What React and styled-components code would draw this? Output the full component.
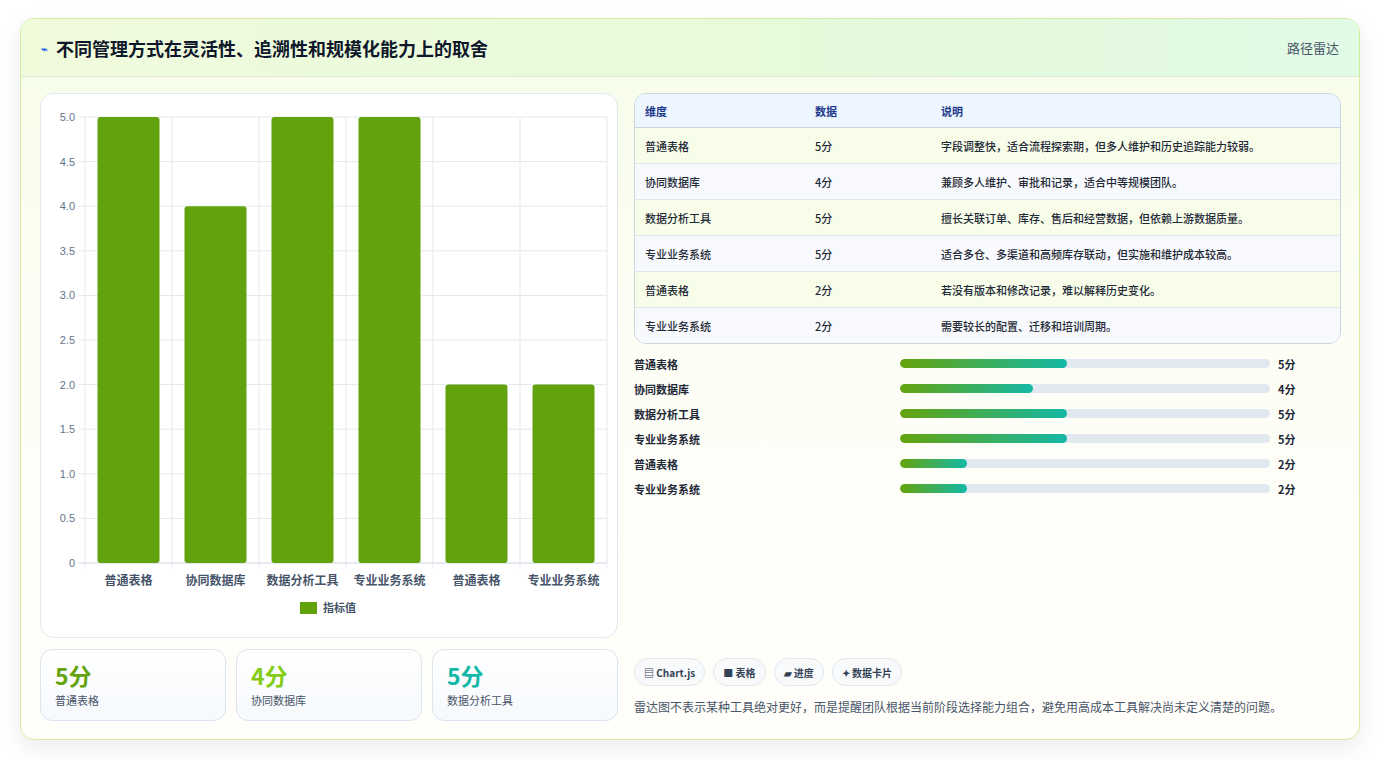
import React from "react";
import styled, { createGlobalStyle } from "styled-components";

const G = createGlobalStyle`
  body{margin:0;background:#fff;font-family:"Noto Sans CJK SC","Noto Sans",sans-serif;}
`;
const Page = styled.div`padding:18px 21px 20px 20px;`;
const Card = styled.div`
  border:1px solid #d4eba0;border-radius:14px;overflow:hidden;
  background:linear-gradient(180deg,#f7fde9,#fefef8 60%,#fffefa);
  box-shadow:0 8px 24px rgba(0,0,0,0.08);
`;
const Header = styled.div`
  height:57px;display:flex;align-items:center;justify-content:space-between;
  padding:0 20px;border-bottom:1px solid #e0ecd8;
  background:linear-gradient(90deg,#f0fbdc,#e4fadc 70%,#e2fbe6);
`;
const Title = styled.h1`margin:0;font-size:18px;font-weight:700;color:#0f172a;display:flex;align-items:center;gap:8px;`;
const Tag = styled.span`font-size:13px;color:#475569;`;
const Body = styled.div`display:grid;grid-template-columns:578px 1fr;gap:16px;padding:16px 18px 18px 19px;`;
const Col = styled.div`display:flex;flex-direction:column;gap:11px;`;
const ChartBox = styled.div`height:543px;border:1px solid #e2e8f0;border-radius:14px;background:#fff;`;
const Stats = styled.div`display:grid;grid-template-columns:repeat(3,1fr);gap:10px;`;
const Stat = styled.div`height:72px;box-sizing:border-box;border:1px solid #dbe4ef;border-radius:12px;background:linear-gradient(180deg,#fff,#f6f9fd);padding:10px 14px;`;
const StatV = styled.div`font-size:23px;font-weight:700;color:${p=>p.c};line-height:30px;`;
const StatL = styled.div`font-size:11px;color:#475569;margin-top:2px;`;
const Right = styled.div`display:flex;flex-direction:column;`;
const Table = styled.div`border:1px solid #cbd5e1;border-radius:12px;overflow:hidden;`;
const Row = styled.div`
  display:grid;grid-template-columns:170px 126px 1fr;align-items:center;padding:0 10px;
  height:${p=>p.h?33:35}px;font-size:11px;font-weight:${p=>p.h?600:500};
  color:${p=>p.h?"#1e3a8a":"#1f2937"};
  background:${p=>p.h?"#edf5ff":p.alt?"#f7f9fc":"#f7fde9"};
  border-top:${p=>p.first?"none":"1px solid "+(p.h2?"#cbd5e1":"#e2e8f0")};
`;
const Bars = styled.div`display:flex;flex-direction:column;margin-top:7px;`;
const BarRow = styled.div`display:grid;grid-template-columns:266px 370px 1fr;align-items:center;height:25px;font-size:11px;font-weight:600;color:#1f2937;`;
const Track = styled.div`height:9px;border-radius:5px;background:#e2e8f0;overflow:hidden;`;
const Fill = styled.div`height:100%;border-radius:5px;background:linear-gradient(90deg,#65a30d,#14b8a6);`;
const Spacer = styled.div`flex:1;`;
const Chips = styled.div`display:flex;gap:8px;`;
const Chip = styled.div`height:26px;padding:0 9px;display:flex;align-items:center;border:1px solid #e2e8f0;border-radius:14px;background:#f8fafc;font-size:10px;font-weight:600;color:#334155;`;
const Note = styled.p`margin:12px 0 6px;font-size:12px;color:#475569;`;

const rows=[["普通表格",5,"字段调整快，适合流程探索期，但多人维护和历史追踪能力较弱。"],["协同数据库",4,"兼顾多人维护、审批和记录，适合中等规模团队。"],["数据分析工具",5,"擅长关联订单、库存、售后和经营数据，但依赖上游数据质量。"],["专业业务系统",5,"适合多仓、多渠道和高频库存联动，但实施和维护成本较高。"],["普通表格",2,"若没有版本和修改记录，难以解释历史变化。"],["专业业务系统",2,"需要较长的配置、迁移和培训周期。"]];

function Chart(){
  const L=44,R=566,T=23,B=469,cw=(R-L)/6;
  const y=v=>B-(B-T)*v/5;
  const ticks=[0,0.5,1,1.5,2,2.5,3,3.5,4,4.5,5];
  return <svg width="578" height="543" style={{display:"block"}}>
    {ticks.map(t=><g key={t}><line x1={L-6} x2={R} y1={y(t)} y2={y(t)} stroke={t===0?"#cbd5e1":"#e5e7eb"}/>
      <text x={L-10} y={y(t)+4} fontSize="11" textAnchor="end" fill="#64748b" fontFamily="Liberation Sans">{t.toFixed(t===0?0:1)}</text></g>)}
    {[0,1,2,3,4,5,6].map(i=><line key={i} x1={L+i*cw} x2={L+i*cw} y1={T} y2={B+6} stroke="#e5e7eb"/>)}
    {rows.map((r,i)=><g key={i}><rect x={L+i*cw+12.5} y={y(r[1])} width={62} height={B-y(r[1])} rx="3" fill="#62a30d"/>
      <text x={L+i*cw+cw/2} y={491} fontSize="12" textAnchor="middle" fill="#475569" fontWeight="600">{r[0]}</text></g>)}
    <rect x={259} y={508} width={17} height={12} fill="#62a30d"/>
    <text x={282} y={518} fontSize="11" fill="#475569" fontWeight="600">指标值</text>
  </svg>;
}

export default function App(){
  return <Page><G/><Card>
    <Header><Title><span style={{fontSize:11,color:"#2563eb"}}>⌁</span>不同管理方式在灵活性、追溯性和规模化能力上的取舍</Title><Tag>路径雷达</Tag></Header>
    <Body>
      <Col>
        <ChartBox><Chart/></ChartBox>
        <Stats>
          <Stat><StatV c="#65a30d">5分</StatV><StatL>普通表格</StatL></Stat>
          <Stat><StatV c="#84cc16">4分</StatV><StatL>协同数据库</StatL></Stat>
          <Stat><StatV c="#14b8a6">5分</StatV><StatL>数据分析工具</StatL></Stat>
        </Stats>
      </Col>
      <Right>
        <Table>
          <Row h first><span>维度</span><span>数据</span><span>说明</span></Row>
          {rows.map((r,i)=><Row key={i} alt={i%2===1} h2={i===0}><span>{r[0]}</span><span>{r[1]}分</span><span>{r[2]}</span></Row>)}
        </Table>
        <Bars>{rows.map((r,i)=><BarRow key={i}><span>{r[0]}</span><Track><Fill style={{width:`${r[1]*9}%`}}/></Track><span style={{paddingLeft:8}}>{r[1]}分</span></BarRow>)}</Bars>
        <Spacer/>
        <Chips><Chip>▤ Chart.js</Chip><Chip>■ 表格</Chip><Chip>▰ 进度</Chip><Chip>✦ 数据卡片</Chip></Chips>
        <Note>雷达图不表示某种工具绝对更好，而是提醒团队根据当前阶段选择能力组合，避免用高成本工具解决尚未定义清楚的问题。</Note>
      </Right>
    </Body>
  </Card></Page>;
}
